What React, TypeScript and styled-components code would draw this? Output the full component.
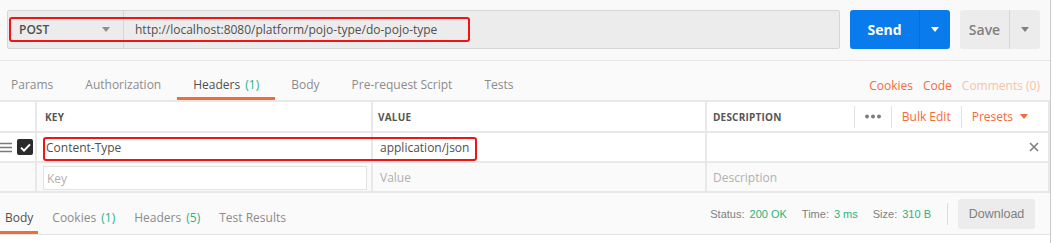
import React from 'react';
import styled, { createGlobalStyle } from 'styled-components';

const GlobalStyle = createGlobalStyle`
  html, body {
    margin: 0;
    padding: 0;
    background: #ffffff;
  }
  body {
    font-family: 'Open Sans', 'Liberation Sans', sans-serif;
    font-size: 12px;
    color: #505050;
  }
  * {
    box-sizing: border-box;
  }
`;

const Frame = styled.div`
  position: relative;
  width: 1051px;
  height: 243px;
  border-right: 1px solid #c9c9c9;
  background: #ffffff;
`;

/* ---------- request bar ---------- */

const RequestBar = styled.div`
  display: flex;
  align-items: center;
  gap: 10px;
  height: 60px;
  padding: 10px 10px 11px 7px;
  background: #f9f9f9;
`;

const UrlField = styled.div`
  flex: 1;
  display: flex;
  height: 39px;
  border: 1px solid #d6d6d6;
  border-radius: 2px;
  background: #ececec;
`;

const MethodSelect = styled.div`
  display: flex;
  align-items: center;
  justify-content: space-between;
  width: 116px;
  padding: 0 13px 0 11px;
  border-right: 1px solid #d6d6d6;
  font-size: 12px;
  font-weight: 600;
  color: #505050;
`;

const UrlText = styled.div`
  display: flex;
  align-items: center;
  padding-left: 11px;
  font-size: 12px;
  color: #505050;
`;

const Caret = styled.span<{ $color: string; $size?: number }>`
  display: inline-block;
  width: 0;
  height: 0;
  border-left: ${({ $size }) => $size ?? 4}px solid transparent;
  border-right: ${({ $size }) => $size ?? 4}px solid transparent;
  border-top: ${({ $size }) => ($size ?? 4) + 1}px solid ${({ $color }) => $color};
`;

const SplitButton = styled.div<{ $primary?: boolean; $width: number }>`
  display: flex;
  width: ${({ $width }) => $width}px;
  height: 39px;
  border-radius: 3px;
  background: ${({ $primary }) => ($primary ? '#097bed' : '#ececec')};
  color: ${({ $primary }) => ($primary ? '#ffffff' : '#808080')};
  font-size: 14px;
  font-weight: ${({ $primary }) => ($primary ? 700 : 600)};
`;

const ButtonMain = styled.div<{ $primary?: boolean }>`
  flex: 1;
  display: flex;
  align-items: center;
  justify-content: center;
  border-right: 1px solid ${({ $primary }) => ($primary ? '#0a6cd0' : '#d6d6d6')};
`;

const ButtonArrow = styled.div`
  display: flex;
  align-items: center;
  justify-content: center;
  width: 30px;
`;

/* ---------- tab strips ---------- */

const TabRow = styled.div<{ $top?: boolean }>`
  display: flex;
  justify-content: space-between;
  height: ${({ $top }) => ($top ? 40 : 42)}px;
  background: #fafafa;
  border-top: ${({ $top }) => ($top ? '1px solid #e6e6e6' : 'none')};
  border-bottom: ${({ $top }) => ($top ? 'none' : '1px solid #e4e4e4')};
`;

const TabList = styled.div<{ $offset: number; $gap: number }>`
  display: flex;
  margin-left: ${({ $offset }) => $offset}px;
  gap: ${({ $gap }) => $gap}px;
`;

const Tab = styled.div<{ $active?: boolean; $pad: number }>`
  display: flex;
  align-items: center;
  padding: 10px ${({ $pad }) => $pad}px 0;
  border-bottom: 3px solid ${({ $active }) => ($active ? '#f26b3a' : 'transparent')};
  color: ${({ $active }) => ($active ? '#505050' : '#8c8c8c')};
  font-size: 12px;
  white-space: pre;
`;

const Count = styled.span`
  margin-left: 2px;
  color: #26b47f;
`;

const LinkGroup = styled.div`
  display: flex;
  align-items: center;
  gap: 10px;
  padding: 9px 10px 0 0;
`;

const OrangeLink = styled.span<{ $faded?: boolean }>`
  color: ${({ $faded }) => ($faded ? '#f8c2a6' : '#f26b3a')};
  font-size: 12px;
`;

/* ---------- headers table ---------- */

const Table = styled.div`
  display: grid;
  grid-template-columns: 35px 334px 332px 1fr;
  grid-template-rows: 29px 28px 28px;
  gap: 2px;
  padding: 2px 2px 2px 0;
  background: #e8e8e8;
`;

const Cell = styled.div<{ $shade?: boolean; $pad?: number }>`
  display: flex;
  align-items: center;
  padding-left: ${({ $pad }) => $pad ?? 7}px;
  background: ${({ $shade }) => ($shade ? '#fafafa' : '#ffffff')};
  font-size: 12px;
  color: #505050;
`;

const HeadLabel = styled.span`
  font-size: 10px;
  font-weight: 700;
  letter-spacing: 0.2px;
  text-transform: uppercase;
  color: #555555;
`;

const HeadActions = styled.div`
  display: flex;
  align-items: center;
  margin-left: auto;
  padding-right: 10px;
`;

const HeadAction = styled.div`
  display: flex;
  align-items: center;
  gap: 7px;
  height: 22px;
  padding: 0 10px;
  border-left: 1px solid #e2e2e2;
  color: #f26b3a;
  font-size: 12px;
`;

const HandleCell = styled(Cell)`
  gap: 5px;
  padding-left: 0;
`;

const Checkbox = styled.div`
  display: flex;
  align-items: center;
  justify-content: center;
  width: 16px;
  height: 16px;
  border-radius: 2px;
  background: #2b2b2b;
`;

const KeyInputCell = styled(Cell)`
  padding: 3px 4px 1px 6px;
  align-items: stretch;
`;

const KeyInput = styled.div`
  flex: 1;
  display: flex;
  align-items: center;
  padding-left: 3px;
  border: 1px solid #e2e2e2;
  background: #ffffff;
  color: #b0b0b0;
`;

const Placeholder = styled.span`
  color: #b0b0b0;
`;

const RemoveButton = styled.div`
  display: flex;
  margin-left: auto;
  padding-right: 9px;
`;

/* ---------- response bar ---------- */

const Stats = styled.div`
  display: flex;
  align-items: center;
  gap: 15px;
  padding-right: 15px;
  font-family: 'Liberation Sans', Arial, sans-serif;
  font-size: 11px;
`;

const Stat = styled.span`
  display: flex;
  gap: 5px;
  color: #808080;
`;

const StatValue = styled.span`
  color: #26b47f;
`;

const Divider = styled.span`
  width: 1px;
  height: 22px;
  margin: 0 -5px 0 1px;
  background: #dcdcdc;
`;

const DownloadButton = styled.div`
  display: flex;
  align-items: center;
  justify-content: center;
  width: 77px;
  height: 30px;
  border-radius: 3px;
  background: #ececec;
  color: #808080;
  font-family: 'Liberation Sans', Arial, sans-serif;
  font-size: 12.5px;
`;

/* ---------- annotation boxes (drawn over the UI) ---------- */

const Annotation = styled.div`
  position: absolute;
  border: 2px solid #f01414;
  border-radius: 3px;
  pointer-events: none;
`;

const Hamburger = () => (
  <svg width="12" height="11" viewBox="0 0 12 11">
    <path d="M0 1.5h12M0 5.5h12M0 9.5h12" stroke="#7a7a7a" strokeWidth="1.5" />
  </svg>
);

const CheckMark = () => (
  <svg width="11" height="9" viewBox="0 0 11 9">
    <path d="M1 4.6l3 3L10 1.4" fill="none" stroke="#ffffff" strokeWidth="2" />
  </svg>
);

const Dots = () => (
  <svg width="16" height="5" viewBox="0 0 16 5">
    <circle cx="2" cy="2.5" r="2" fill="#7d7d7d" />
    <circle cx="8" cy="2.5" r="2" fill="#7d7d7d" />
    <circle cx="14" cy="2.5" r="2" fill="#7d7d7d" />
  </svg>
);

const Cross = () => (
  <svg width="10" height="10" viewBox="0 0 10 10">
    <path d="M1 1l8 8M9 1l-8 8" stroke="#7a7a7a" strokeWidth="1.5" />
  </svg>
);

const requestTabs = [
  { label: 'Params' },
  { label: 'Authorization' },
  { label: 'Headers', count: 1, active: true },
  { label: 'Body' },
  { label: 'Pre-request Script' },
  { label: 'Tests' },
];

const responseTabs = [
  { label: 'Body', active: true },
  { label: 'Cookies', count: 1 },
  { label: 'Headers', count: 5 },
  { label: 'Test Results' },
];

const App: React.FC = () => {
  return (
    <>
      <GlobalStyle />
      <Frame>
        <RequestBar>
          <UrlField>
            <MethodSelect>
              POST
              <Caret $color="#8f8f8f" />
            </MethodSelect>
            <UrlText>http://localhost:8080/platform/pojo-type/do-pojo-type</UrlText>
          </UrlField>
          <SplitButton $primary $width={100}>
            <ButtonMain $primary>Send</ButtonMain>
            <ButtonArrow>
              <Caret $color="#ffffff" />
            </ButtonArrow>
          </SplitButton>
          <SplitButton $width={80}>
            <ButtonMain>Save</ButtonMain>
            <ButtonArrow>
              <Caret $color="#808080" />
            </ButtonArrow>
          </SplitButton>
        </RequestBar>

        <TabRow $top>
          <TabList $offset={-5} $gap={0}>
            {requestTabs.map((t) => (
              <Tab key={t.label} $active={t.active} $pad={16}>
                {t.label}
                {t.count !== undefined && <Count> ({t.count})</Count>}
              </Tab>
            ))}
          </TabList>
          <LinkGroup>
            <OrangeLink>Cookies</OrangeLink>
            <OrangeLink>Code</OrangeLink>
            <OrangeLink $faded>Comments (0)</OrangeLink>
          </LinkGroup>
        </TabRow>

        <Table>
          <Cell />
          <Cell $pad={8}>
            <HeadLabel>Key</HeadLabel>
          </Cell>
          <Cell $pad={5}>
            <HeadLabel>Value</HeadLabel>
          </Cell>
          <Cell $pad={6}>
            <HeadLabel>Description</HeadLabel>
            <HeadActions>
              <HeadAction>
                <Dots />
              </HeadAction>
              <HeadAction>Bulk Edit</HeadAction>
              <HeadAction>
                Presets
                <Caret $color="#f26b3a" $size={4.5} />
              </HeadAction>
            </HeadActions>
          </Cell>

          <HandleCell>
            <Hamburger />
            <Checkbox>
              <CheckMark />
            </Checkbox>
          </HandleCell>
          <Cell $pad={9}>Content-Type</Cell>
          <Cell $pad={7}>application/json</Cell>
          <Cell>
            <RemoveButton>
              <Cross />
            </RemoveButton>
          </Cell>

          <Cell $shade />
          <KeyInputCell $shade>
            <KeyInput>Key</KeyInput>
          </KeyInputCell>
          <Cell $shade $pad={7}>
            <Placeholder>Value</Placeholder>
          </Cell>
          <Cell $shade $pad={6}>
            <Placeholder>Description</Placeholder>
          </Cell>
        </Table>

        <TabRow>
          <TabList $offset={0} $gap={9}>
            {responseTabs.map((t) => (
              <Tab key={t.label} $active={t.active} $pad={5}>
                {t.label}
                {t.count !== undefined && <Count> ({t.count})</Count>}
              </Tab>
            ))}
          </TabList>
          <Stats>
            <Stat>
              Status: <StatValue>200 OK</StatValue>
            </Stat>
            <Stat>
              Time: <StatValue>3 ms</StatValue>
            </Stat>
            <Stat>
              Size: <StatValue>310 B</StatValue>
            </Stat>
            <Divider />
            <DownloadButton>Download</DownloadButton>
          </Stats>
        </TabRow>

        <Annotation style={{ left: 9, top: 17, width: 461, height: 25 }} />
        <Annotation style={{ left: 43, top: 137, width: 434, height: 24 }} />
      </Frame>
    </>
  );
};

export default App;
